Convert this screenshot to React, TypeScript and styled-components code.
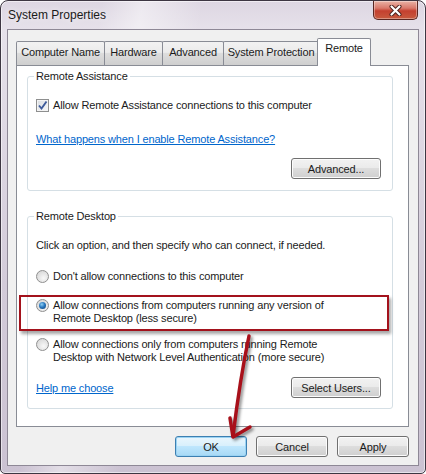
import styled, { createGlobalStyle } from "styled-components";

const GlobalStyle = createGlobalStyle`
  html, body {
    margin: 0;
    padding: 0;
    background: #ffffff;
  }
  body {
    font-family: "Liberation Sans", Arial, sans-serif;
    font-size: 11px;
    letter-spacing: -0.15px;
    color: #1b1b1b;
  }
  * {
    box-sizing: border-box;
  }
`;

const Window = styled.div`
  position: relative;
  width: 426px;
  height: 474px;
  display: flex;
  flex-direction: column;
  padding: 0 6px 7px;
  border: 1px solid #3d3642;
  border-radius: 8px 8px 5px 5px;
  background:
    linear-gradient(100deg, rgba(255, 255, 255, 0) 20%, rgba(255, 255, 255, 0.45) 28%, rgba(255, 255, 255, 0) 40%),
    linear-gradient(180deg, #ddd6e2 0%, #e6e1ea 6%, #d3cbd9 60%, #cbc2d2 100%);
  box-shadow: inset 0 0 0 1px rgba(255, 255, 255, 0.55);
`;

const TitleBar = styled.div`
  height: 28px;
  display: flex;
  justify-content: space-between;
  align-items: flex-start;
`;

const TitleText = styled.div`
  padding: 7px 0 0 1px;
  font-size: 12px;
  letter-spacing: 0;
  color: #1a1a1a;
  text-shadow: 0 0 6px rgba(255, 255, 255, 0.9);
`;

const CloseButton = styled.div`
  width: 45px;
  height: 19px;
  margin-right: 1px;
  display: flex;
  align-items: center;
  justify-content: center;
  border: 1px solid #5a2722;
  border-top: none;
  border-radius: 0 0 5px 5px;
  background: linear-gradient(180deg, #eab3a6 0%, #d9786a 40%, #c4402f 55%, #c75a3e 100%);
  box-shadow: inset 0 0 0 1px rgba(255, 255, 255, 0.35);
`;

const Client = styled.div`
  flex: 1;
  display: flex;
  flex-direction: column;
  padding: 8px 9px 8px 8px;
  background: #f0f0f0;
  border: 1px solid #8e8896;
`;

const TabRow = styled.div`
  position: relative;
  z-index: 1;
  display: flex;
  align-items: flex-end;
  height: 27px;
`;

const Tab = styled.div<{ $width: number; $active?: boolean }>`
  width: ${(p) => p.$width}px;
  height: ${(p) => (p.$active ? "28px" : "24px")};
  margin-bottom: ${(p) => (p.$active ? "-1px" : "0")};
  margin-right: ${(p) => (p.$active ? "0" : "-1px")};
  margin-left: ${(p) => (p.$active ? "-1px" : "0")};
  padding-top: ${(p) => (p.$active ? "3px" : "4px")};
  line-height: 13px;
  text-align: center;
  border: 1px solid #898c95;
  border-bottom: none;
  border-radius: 2px 2px 0 0;
  white-space: nowrap;
  color: #1b1b1b;
  background: ${(p) =>
    p.$active
      ? "#ffffff"
      : "linear-gradient(180deg, #f2f2f2 0%, #ebebeb 45%, #dddddd 50%, #cfcfcf 100%)"};
`;

const Panel = styled.div`
  flex: 1;
  display: flex;
  flex-direction: column;
  gap: 18px;
  padding: 3px 15px 0 10px;
  background: #ffffff;
  border: 1px solid #898c95;
`;

const GroupBox = styled.fieldset<{ $bottom: number }>`
  margin: 0;
  padding: 0 11px ${(p) => p.$bottom}px 8px;
  border: 1px solid #d5dfe5;
  border-radius: 3px;
  min-width: 0;
`;

const Legend = styled.legend`
  padding: 0 2px;
  margin-left: -2px;
  line-height: 14px;
  color: #1b1b1b;
`;

const Line = styled.div<{ $top: number }>`
  margin-top: ${(p) => p.$top}px;
  line-height: 14px;
`;

const CheckRow = styled.label<{ $top: number }>`
  display: flex;
  align-items: center;
  gap: 4px;
  margin-top: ${(p) => p.$top}px;
  line-height: 14px;
`;

const CheckBox = styled.span`
  width: 13px;
  height: 13px;
  display: flex;
  align-items: center;
  justify-content: center;
  border: 1px solid #8e8f8f;
  background: linear-gradient(135deg, #d9dde2 0%, #f6f7f8 100%);
  box-shadow: inset 0 0 0 1px #f4f4f4;
`;

const OptionRow = styled.label<{ $top: number; $marked?: boolean }>`
  position: relative;
  display: flex;
  align-items: flex-start;
  gap: 4px;
  margin-top: ${(p) => p.$top}px;
  line-height: 13px;

  ${(p) =>
    p.$marked &&
    `
    &::after {
      content: "";
      position: absolute;
      left: -17px;
      right: -8px;
      top: -4px;
      bottom: -6px;
      border: 2px solid #a3121c;
      box-shadow: 2px 3px 3px rgba(0, 0, 0, 0.35);
      pointer-events: none;
    }
  `}
`;

const Radio = styled.span<{ $checked?: boolean }>`
  flex: none;
  width: 13px;
  height: 13px;
  display: flex;
  align-items: center;
  justify-content: center;
  border-radius: 50%;
  border: 1px solid #8f8f8f;
  background: radial-gradient(circle at 60% 65%, #f8f8f8 0%, #dcdcdc 70%, #cfcfcf 100%);

  &::after {
    content: "";
    display: ${(p) => (p.$checked ? "block" : "none")};
    width: 7px;
    height: 7px;
    border-radius: 50%;
    background: radial-gradient(circle at 40% 35%, #8fd0f4 0%, #2a79c0 45%, #0c3a6f 100%);
  }
`;

const Link = styled.a`
  color: #0066cc;
  text-decoration: underline;
  cursor: pointer;
`;

const ActionRow = styled.div<{ $top: number; $spread?: boolean }>`
  display: flex;
  align-items: center;
  justify-content: ${(p) => (p.$spread ? "space-between" : "flex-end")};
  margin-top: ${(p) => p.$top}px;
  line-height: 14px;
`;

const Button = styled.button<{ $width: number; $default?: boolean }>`
  width: ${(p) => p.$width}px;
  height: 21px;
  padding: 0;
  font: inherit;
  letter-spacing: inherit;
  color: #1b1b1b;
  border: 1px solid ${(p) => (p.$default ? "#3c7fb1" : "#707070")};
  border-radius: 3px;
  background: ${(p) =>
    p.$default
      ? "linear-gradient(180deg, #eaf6fd 0%, #d9f0fc 45%, #bee6fd 50%, #a7d9f5 100%)"
      : "linear-gradient(180deg, #f2f2f2 0%, #ebebeb 45%, #dddddd 50%, #cfcfcf 100%)"};
  box-shadow: inset 0 0 0 1px ${(p) => (p.$default ? "#9bd3f3" : "#fcfcfc")};
`;

const DialogButtons = styled.div`
  display: flex;
  justify-content: flex-end;
  gap: 9px;
  margin-top: 9px;
`;

const Arrow = styled.svg`
  position: absolute;
  left: 218px;
  top: 328px;
  overflow: visible;
  pointer-events: none;
  filter: drop-shadow(2px 2px 1.5px rgba(0, 0, 0, 0.45));
`;

export default function App() {
  return (
    <>
      <GlobalStyle />
      <Window>
        <TitleBar>
          <TitleText>System Properties</TitleText>
          <CloseButton>
            <svg width="13" height="11" viewBox="0 0 13 11">
              <path d="M2.5 1.5 L10.5 9.5 M10.5 1.5 L2.5 9.5" stroke="#4a1f1a" strokeWidth="4" strokeLinecap="round" />
              <path d="M2.5 1.5 L10.5 9.5 M10.5 1.5 L2.5 9.5" stroke="#ffffff" strokeWidth="2.2" strokeLinecap="round" />
            </svg>
          </CloseButton>
        </TitleBar>

        <Client>
          <TabRow>
            <Tab $width={89}>Computer Name</Tab>
            <Tab $width={59}>Hardware</Tab>
            <Tab $width={62}>Advanced</Tab>
            <Tab $width={96}>System Protection</Tab>
            <Tab $width={54} $active>Remote</Tab>
          </TabRow>

          <Panel>
            <GroupBox $bottom={11}>
              <Legend>Remote Assistance</Legend>
              <CheckRow $top={15}>
                <CheckBox>
                  <svg width="11" height="11" viewBox="0 0 11 11">
                    <path d="M2 5.5 L4.5 8.5 L9.5 1.5" fill="none" stroke="#3d5a9a" strokeWidth="1.9" />
                  </svg>
                </CheckBox>
                Allow Remote Assistance connections to this computer
              </CheckRow>
              <Line $top={20}>
                <Link>What happens when I enable Remote Assistance?</Link>
              </Line>
              <ActionRow $top={12}>
                <Button $width={90}>Advanced...</Button>
              </ActionRow>
            </GroupBox>

            <GroupBox $bottom={10}>
              <Legend>Remote Desktop</Legend>
              <Line $top={15}>Click an option, and then specify who can connect, if needed.</Line>
              <OptionRow $top={18}>
                <Radio />
                <span>Don't allow connections to this computer</span>
              </OptionRow>
              <OptionRow $top={16} $marked>
                <Radio $checked />
                <span>
                  Allow connections from computers running any version of
                  <br />
                  Remote Desktop (less secure)
                </span>
              </OptionRow>
              <OptionRow $top={13}>
                <Radio />
                <span>
                  Allow connections only from computers running Remote
                  <br />
                  Desktop with Network Level Authentication (more secure)
                </span>
              </OptionRow>
              <ActionRow $top={13} $spread>
                <Link>Help me choose</Link>
                <Button $width={90}>Select Users...</Button>
              </ActionRow>
            </GroupBox>
          </Panel>

          <DialogButtons>
            <Button $width={72} $default>OK</Button>
            <Button $width={72}>Cancel</Button>
            <Button $width={72}>Apply</Button>
          </DialogButtons>
        </Client>

        <Arrow width="40" height="115" viewBox="0 0 40 115">
          <path d="M30 7 Q 21 50 14 107" fill="none" stroke="#a8101a" strokeWidth="3.5" strokeLinecap="round" />
          <path d="M11 89 L14 108 L31 98" fill="none" stroke="#a8101a" strokeWidth="3.5" strokeLinecap="round" strokeLinejoin="round" />
        </Arrow>
      </Window>
    </>
  );
}
